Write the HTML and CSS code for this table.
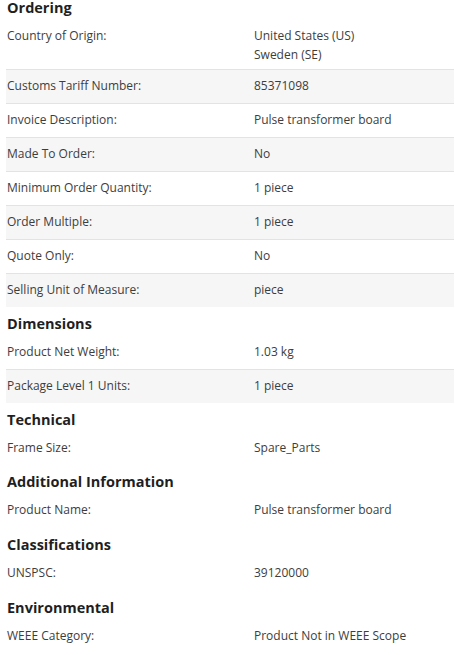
FILE: index.html
```html
<!DOCTYPE html>
<html lang="en">
<head>
<meta charset="utf-8">
<title>Product details</title>
<link rel="stylesheet" href="styles.css">
</head>
<body>
<div class="page">
  <section class="sec">
    <h2 class="sec-title">Ordering</h2>
    <div class="rows">
      <div class="row row-multi"><div class="label">Country of Origin:</div><div class="value"><div>United States (US)</div><div>Sweden (SE)</div></div></div>
      <div class="row"><div class="label">Customs Tariff Number:</div><div class="value">85371098</div></div>
      <div class="row"><div class="label">Invoice Description:</div><div class="value">Pulse transformer board</div></div>
      <div class="row"><div class="label">Made To Order:</div><div class="value">No</div></div>
      <div class="row"><div class="label">Minimum Order Quantity:</div><div class="value">1 piece</div></div>
      <div class="row"><div class="label">Order Multiple:</div><div class="value">1 piece</div></div>
      <div class="row"><div class="label">Quote Only:</div><div class="value">No</div></div>
      <div class="row"><div class="label">Selling Unit of Measure:</div><div class="value">piece</div></div>
    </div>
  </section>
  <section class="sec">
    <h2 class="sec-title">Dimensions</h2>
    <div class="rows">
      <div class="row"><div class="label">Product Net Weight:</div><div class="value">1.03 kg</div></div>
      <div class="row"><div class="label">Package Level 1 Units:</div><div class="value">1 piece</div></div>
    </div>
  </section>
  <section class="sec">
    <h2 class="sec-title">Technical</h2>
    <div class="rows">
      <div class="row"><div class="label">Frame Size:</div><div class="value">Spare_Parts</div></div>
    </div>
  </section>
  <section class="sec">
    <h2 class="sec-title">Additional Information</h2>
    <div class="rows">
      <div class="row"><div class="label">Product Name:</div><div class="value">Pulse transformer board</div></div>
    </div>
  </section>
  <section class="sec">
    <h2 class="sec-title">Classifications</h2>
    <div class="rows">
      <div class="row"><div class="label">UNSPSC:</div><div class="value">39120000</div></div>
    </div>
  </section>
  <section class="sec">
    <h2 class="sec-title">Environmental</h2>
    <div class="rows">
      <div class="row"><div class="label">WEEE Category:</div><div class="value">Product Not in WEEE Scope</div></div>
    </div>
  </section>
</div>
</body>
</html>
```
FILE: styles.css
```css
html, body {
  margin: 0;
  padding: 0;
  background: #ffffff;
}

body {
  font-family: "Open Sans", "Liberation Sans", sans-serif;
  color: #3d3d3d;
  font-size: 12px;
}

.page {
  padding: 0 1px 0 6px;
}

.sec-title {
  margin: 0;
  padding: 6px 0 2px 1px;
  font-size: 14.5px;
  line-height: 21px;
  font-weight: 700;
  color: #1f1f1f;
}

.sec:first-child .sec-title {
  padding-top: 0;
  padding-bottom: 4px;
  line-height: 16px;
}

.sec:nth-child(n+5) .sec-title {
  padding-top: 7px;
}

.row {
  display: grid;
  grid-template-columns: 247px 1fr;
  padding: 6px 0 8px 1px;
  line-height: 19px;
  border-top: 1px solid #e3e3e3;
}

.row-multi {
  padding-bottom: 5px;
}

.row:first-child {
  border-top: none;
}

.row:nth-child(even) {
  background: #f6f6f6;
}

.label,
.value {
  color: #3d3d3d;
}
```
